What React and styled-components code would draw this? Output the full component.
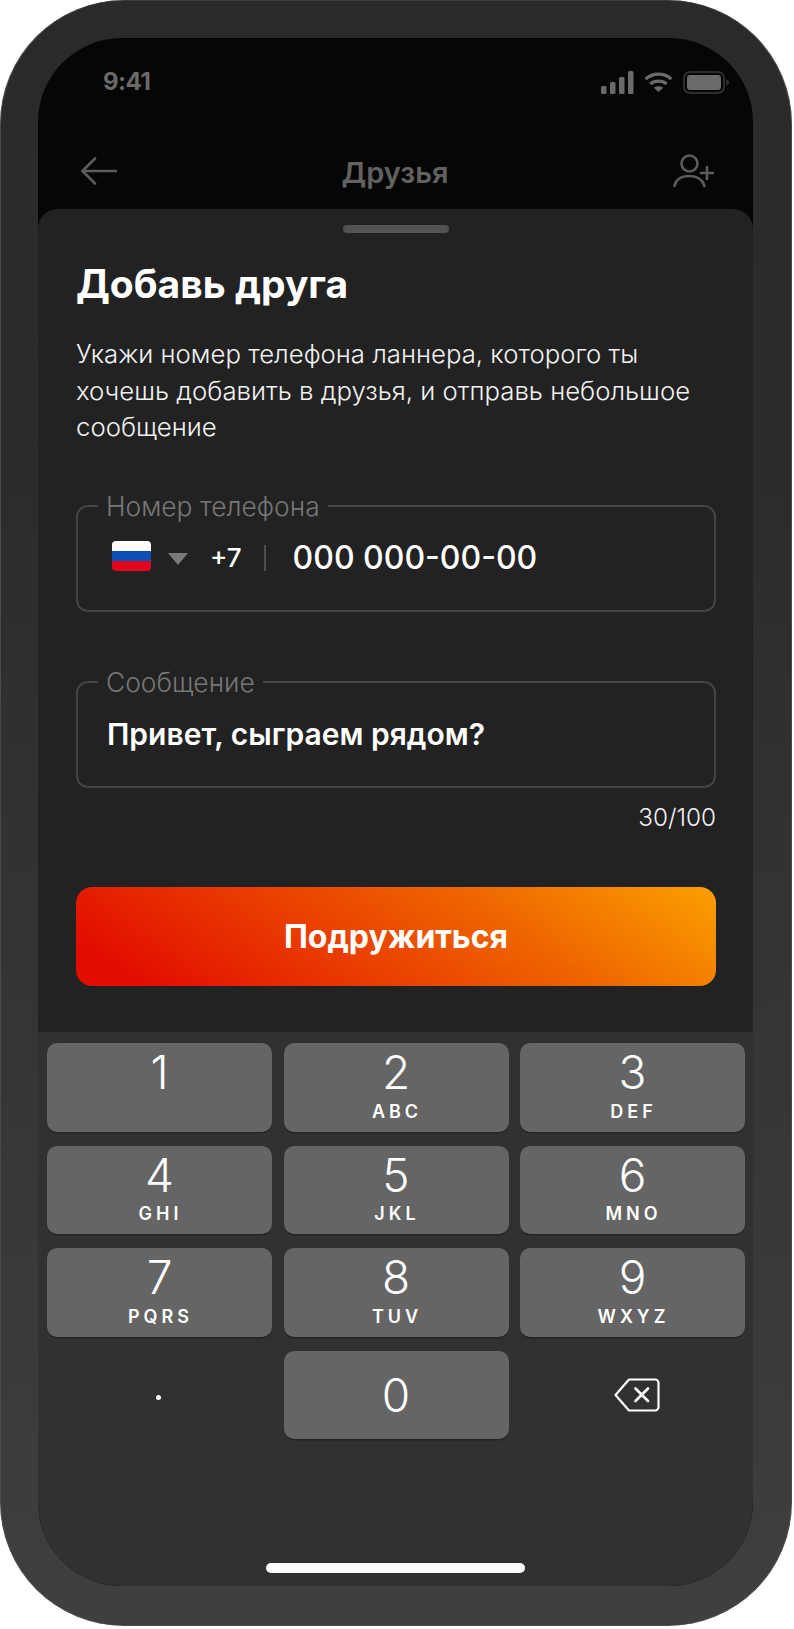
import React from "react";
import styled, { createGlobalStyle } from "styled-components";

const Global = createGlobalStyle`
  html, body { margin: 0; padding: 0; background: #fff; }
  * { box-sizing: border-box; }
  body { font-family: Inter, "Noto Sans", sans-serif; }
`;

const Phone = styled.div`
  width: 792px;
  height: 1626px;
  padding: 37px 38px 39px 37px;
  border-radius: 124px;
  border: 1px solid #4a4a4a;
  border-top-color: #3c3c3c;
  background: linear-gradient(180deg, #2a2a2a 0%, #2c2c2c 30%, #3f3f3f 100%);
`;
const Screen = styled.div`
  height: 100%;
  border-radius: 84px;
  overflow: hidden;
  background: #060606;
  display: flex;
  flex-direction: column;
`;
const StatusBar = styled.div`
  height: 67px;
  padding: 30px 24px 0 65px;
  display: flex;
  justify-content: space-between;
  align-items: flex-start;
  flex: none;
`;
const Time = styled.span`
  font-size: 24px;
  line-height: 28px;
  font-weight: 700;
  color: #6a6a6a;
  letter-spacing: -0.5px;
`;
const StatusIcons = styled.div`
  display: flex;
  align-items: center;
  gap: 10px;
  margin-top: 3px;
`;
const Nav = styled.div`
  height: 104px;
  padding: 36px 38px 8px 43px;
  display: flex;
  align-items: center;
  justify-content: space-between;
  flex: none;
`;
const NavTitle = styled.span`
  font-size: 29px;
  font-weight: 600;
  color: #626262;
  margin-top: 3px;
`;
const Sheet = styled.div`
  height: 823px;
  flex: none;
  background: #222222;
  border-radius: 20px 20px 0 0;
  padding: 16px 37px 0 38px;
  display: flex;
  flex-direction: column;
`;
const Handle = styled.div`
  width: 106px;
  height: 8px;
  border-radius: 4px;
  background: #525252;
  align-self: center;
  flex: none;
`;
const Title = styled.h1`
  margin: 27px 0 0;
  font-size: 39px;
  line-height: 48px;
  font-weight: 700;
  color: #fff;
`;
const Description = styled.p`
  margin: 28px 0 0;
  font-size: 25.75px;
  line-height: 36.5px;
  font-weight: 300;
  color: #f2f2f2;
`;
const Field = styled.fieldset`
  margin: ${(p) => p.$top}px 0 0;
  padding: 0 29px;
  height: 119px;
  border: 2px solid #454545;
  border-radius: 12px;
  display: flex;
  align-items: flex-start;
  min-width: 0;
`;
const Legend = styled.legend`
  margin-left: -9px;
  padding: 0 8px;
  font-size: 26.4px;
  line-height: 26px;
  font-weight: 300;
  color: #777;
`;
const PhoneRow = styled.div`
  display: flex;
  align-items: center;
  margin-top: 19px;
  margin-left: 5px;
`;
const FlagSlot = styled.div`
  display: flex;
  margin-top: -3px;
`;
const Caret = styled.div`
  width: 0;
  height: 0;
  margin: 2px 0 0 17px;
  border-left: 10px solid transparent;
  border-right: 10px solid transparent;
  border-top: 12px solid #7b7b7b;
`;
const Code = styled.span`
  margin-left: 22px;
  font-size: 26px;
  font-weight: 500;
  line-height: 40px;
  color: #fff;
`;
const Divider = styled.div`
  width: 2px;
  height: 26px;
  margin: 0 27px 0 22px;
  background: #4c4c4c;
`;
const PhoneValue = styled.span`
  font-size: 32px;
  font-weight: 500;
  line-height: 40px;
  color: #fff;
`;
const Message = styled.div`
  margin-top: 19px;
  font-size: 30px;
  font-weight: 600;
  line-height: 40px;
  color: #fff;
`;
const Counter = styled.div`
  margin-top: 15px;
  text-align: right;
  font-size: 24.3px;
  line-height: 28px;
  font-weight: 300;
  color: #f2f2f2;
`;
const CTA = styled.button`
  margin-top: 56px;
  height: 99px;
  flex: none;
  border: 0;
  border-radius: 16px;
  font-family: inherit;
  font-size: 32px;
  font-weight: 700;
  color: #fff;
  background: linear-gradient(35deg, #e20c00 8%, #e83200 32%, #ee6400 66%, #fb9c00 98%);
`;
const Keyboard = styled.div`
  flex: 1;
  background: #313131;
  padding: 11px 8px 0 9px;
  position: relative;
`;
const Keys = styled.div`
  display: grid;
  grid-template-columns: repeat(3, 225px);
  grid-auto-rows: 88.5px;
  column-gap: 11.5px;
  row-gap: 14px;
`;
const Key = styled.div`
  background: ${(p) => (p.$plain ? "transparent" : "#656565")};
  border-radius: 10px;
  box-shadow: ${(p) => (p.$plain ? "none" : "0 1.5px 0 #242424")};
  display: flex;
  flex-direction: column;
  align-items: center;
  color: #fff;
  ${(p) => p.$center && "justify-content: center;"}
`;
const Digit = styled.span`
  margin-top: ${(p) => p.$top}px;
  font-size: 46px;
  line-height: 50px;
  font-weight: 300;
`;
const Letters = styled.span`
  margin-top: 3.5px;
  font-size: 18px;
  line-height: 22px;
  font-weight: 600;
  letter-spacing: 4px;
  margin-right: -2px;
`;
const Dot = styled.div`
  width: 5px;
  height: 5px;
  border-radius: 50%;
  background: #fff;
  margin: 5px 2px 0 0;
`;
const BackspaceSlot = styled.div`
  margin: 0 0 0 8px;
  display: flex;
`;
const HomeIndicator = styled.div`
  position: absolute;
  left: 228px;
  bottom: 13px;
  width: 259px;
  height: 10px;
  border-radius: 5px;
  background: #fff;
`;

const Signal = () => (
  <svg width="33" height="23" viewBox="0 0 33 23" fill="#6a6a6a">
    <rect x="0" y="15" width="5.5" height="8" rx="1.5" />
    <rect x="9" y="11" width="5.5" height="12" rx="1.5" />
    <rect x="18" y="6" width="5.5" height="17" rx="1.5" />
    <rect x="27" y="0" width="5.5" height="23" rx="1.5" />
  </svg>
);
const Wifi = () => (
  <svg width="29" height="21" viewBox="0 0 30 22" fill="none" stroke="#6a6a6a" strokeWidth="3.4">
    <path d="M1.5 7.5C9 .5 21 .5 28.5 7.5" />
    <path d="M6.5 12.5C11 8.6 19 8.6 23.5 12.5" />
    <path d="M15 21l-5-4.6c2.8-2.1 7.2-2.1 10 0z" fill="#6a6a6a" stroke="none" />
  </svg>
);
const Battery = () => (
  <svg width="46" height="23" viewBox="0 0 46 23" fill="none">
    <rect x="1" y="1" width="40" height="21" rx="6" stroke="#2e2e2e" strokeWidth="2" />
    <rect x="4" y="4" width="34" height="15" rx="3" fill="#6a6a6a" />
    <path d="M43 8.500c2 .6 3 1.600 3 3s-1 2.400-3 3z" fill="#2e2e2e" />
  </svg>
);
const BackArrow = () => (
  <svg width="36" height="28" viewBox="0 0 36 28" fill="none" stroke="#5c5c5c" strokeWidth="2.6" strokeLinecap="round" strokeLinejoin="round">
    <path d="M35 14H2" />
    <path d="M14 1.500 1.500 14 14 26.500" />
  </svg>
);
const AddFriend = () => (
  <svg width="42" height="34" viewBox="0 0 42 34" fill="none" stroke="#5c5c5c" strokeWidth="2.6" strokeLinecap="round">
    <circle cx="16.500" cy="9.500" r="8" />
    <path d="M1.500 32c1-6.500 7-10 15-10s13 3.500 15 10" />
    <path d="M28 19h12M34 13v12" />
  </svg>
);
const Flag = () => (
  <svg width="39" height="30" viewBox="0 0 39 30">
    <defs>
      <clipPath id="flagClip"><rect width="39" height="30" rx="4" /></clipPath>
    </defs>
    <g clipPath="url(#flagClip)">
      <rect width="39" height="10" fill="#fff" />
      <rect y="10" width="39" height="10" fill="#0b4fb5" />
      <rect y="20" width="39" height="10" fill="#e3041f" />
    </g>
  </svg>
);
const Backspace = () => (
  <svg width="46" height="34" viewBox="0 0 46 34" fill="none" stroke="#fff" strokeWidth="2.2" strokeLinecap="round" strokeLinejoin="round">
    <path d="M15 1.500H41a3.500 3.500 0 0 1 3.500 3.500V29a3.500 3.500 0 0 1-3.500 3.500H15L1.500 17z" />
    <path d="M21.500 10.500 34 23M34 10.500 21.500 23" strokeWidth="2.6" />
  </svg>
);

const keys = [
  ["1", ""], ["2", "ABC"], ["3", "DEF"],
  ["4", "GHI"], ["5", "JKL"], ["6", "MNO"],
  ["7", "PQRS"], ["8", "TUV"], ["9", "WXYZ"],
];

export default function App() {
  return (
    <>
      <Global />
      <Phone>
        <Screen>
          <StatusBar>
            <Time>9:41</Time>
            <StatusIcons>
              <Signal />
              <Wifi />
              <Battery />
            </StatusIcons>
          </StatusBar>
          <Nav>
            <BackArrow />
            <NavTitle>Друзья</NavTitle>
            <AddFriend />
          </Nav>
          <Sheet>
            <Handle />
            <Title>Добавь друга</Title>
            <Description>
              Укажи номер телефона ланнера, которого ты хочешь добавить в друзья, и отправь небольшое сообщение
            </Description>
            <Field $top={47}>
              <Legend>Номер телефона</Legend>
              <PhoneRow>
                <FlagSlot><Flag /></FlagSlot>
                <Caret />
                <Code>+7</Code>
                <Divider />
                <PhoneValue>000 000-00-00</PhoneValue>
              </PhoneRow>
            </Field>
            <Field $top={57}>
              <Legend>Сообщение</Legend>
              <Message>Привет, сыграем рядом?</Message>
            </Field>
            <Counter>30/100</Counter>
            <CTA>Подружиться</CTA>
          </Sheet>
          <Keyboard>
            <Keys>
              {keys.map(([d, l]) => (
                <Key key={d}>
                  <Digit $top={4}>{d}</Digit>
                  {l && <Letters>{l}</Letters>}
                </Key>
              ))}
              <Key $plain $center><Dot /></Key>
              <Key $center><Digit $top={0}>0</Digit></Key>
              <Key $plain $center><BackspaceSlot><Backspace /></BackspaceSlot></Key>
            </Keys>
            <HomeIndicator />
          </Keyboard>
        </Screen>
      </Phone>
    </>
  );
}
